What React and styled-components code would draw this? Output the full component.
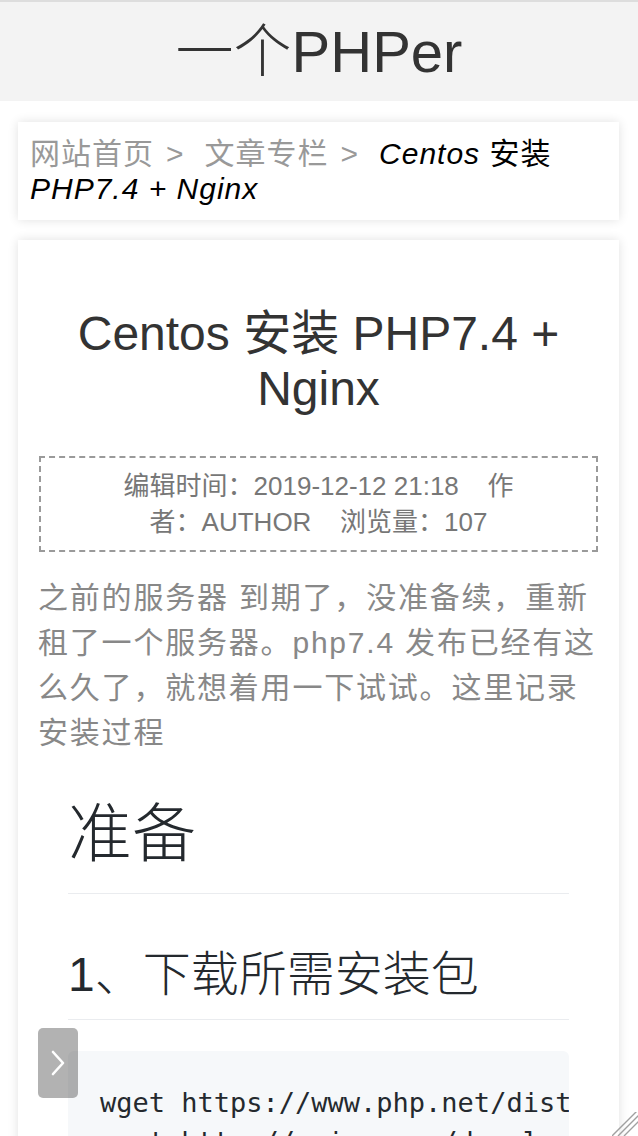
import styled, { createGlobalStyle } from 'styled-components';

const GlobalStyle = createGlobalStyle`
    body {
        margin: 0;
        background: #ffffff;
        font-family: 'Liberation Sans', 'Noto Sans CJK SC', sans-serif;
    }
`;

const meta = [
    { label: '编辑时间：', value: '2019-12-12 21:18' },
    { label: '作者：', value: 'AUTHOR' },
    { label: '浏览量：', value: '107' },
];

const code = [
    'wget https://www.php.net/distributions/php-7.4.0.tar.gz',
    'wget http://nginx.org/download/nginx-1.16.1.tar.gz',
];

export default function App() {
    return (
        <>
            <GlobalStyle />
            <Header>
                <SiteTitle>一个PHPer</SiteTitle>
            </Header>
            <Main>
                <Breadcrumb>
                    <Crumb href='#'>网站首页</Crumb>
                    <Sep>&gt;</Sep>
                    <Crumb href='#'>文章专栏</Crumb>
                    <Sep>&gt;</Sep>
                    <Current>Centos 安装 PHP7.4 + Nginx</Current>
                </Breadcrumb>
                <Article>
                    <ArticleTitle>Centos 安装 PHP7.4 + Nginx</ArticleTitle>
                    <MetaBox>
                        {meta.map((m, i) => (
                            <MetaItem key={m.label} first={i === 0}>
                                {m.label}
                                {m.value}
                            </MetaItem>
                        ))}
                    </MetaBox>
                    <Summary>
                        之前的服务器 到期了，没准备续，重新租了一个服务器。php7.4 发布已经有这么久了，就想着用一下试试。这里记录安装过程
                    </Summary>
                    <Markdown>
                        <H1>准备</H1>
                        <H2>1、下载所需安装包</H2>
                        <Pre>
                            <code>{code.join('\n')}</code>
                        </Pre>
                    </Markdown>
                </Article>
            </Main>
            <SideToggle aria-label='open'>
                <svg width='18' height='28' viewBox='0 0 18 28'>
                    <path d='M4 3 L14 14 L4 25' fill='none' stroke='#fff' strokeWidth='2.6' strokeLinecap='round' strokeLinejoin='round' />
                </svg>
            </SideToggle>
            <Grip width='26' height='24' viewBox='0 0 26 24'>
                <path d='M0 24 L26 -2 M6 24 L30 0 M12 24 L32 4' stroke='#a0a0a0' strokeWidth='1.4' />
            </Grip>
        </>
    );
}

const Header = styled.header`
    height: 99px;
    border-top: 2px solid #dddddd;
    background: #f3f3f3;
    display: flex;
    align-items: center;
    justify-content: center;
`;

const SiteTitle = styled.h1`
    margin: 0;
    font-size: 58px;
    font-weight: 300;
    color: #333333;
    line-height: 1;
`;

const Main = styled.main`
    padding: 21px 19px 0 18px;
    display: flex;
    flex-direction: column;
    gap: 20px;
`;

const Card = styled.section`
    background: #ffffff;
    box-shadow: 0 0 10px rgba(0, 0, 0, 0.12);
`;

const Breadcrumb = styled(Card)`
    padding: 14px 12px;
    font-size: 30px;
    line-height: 35px;
    letter-spacing: 1px;
`;

const Crumb = styled.a`
    color: #999999;
    text-decoration: none;
`;

const Sep = styled.span`
    color: #999999;
    margin: 0 20px 0 12px;
`;

const Current = styled.span`
    color: #000000;
    font-style: italic;
    font-synthesis: none;
`;

const Article = styled(Card)`
    padding: 20px 20px 0 20px;
    min-height: 1000px;
`;

const ArticleTitle = styled.h2`
    margin: 46px 0 0;
    text-align: center;
    font-size: 48px;
    line-height: 55px;
    font-weight: 400;
    color: #333333;
`;

const MetaBox = styled.div`
    margin: 40px 1px 0;
    padding: 10px 64px;
    border: 2px dashed #9a9a9a;
    text-align: center;
    font-size: 26px;
    line-height: 36px;
    color: #777777;
`;

const MetaItem = styled.span`
    margin-left: ${({ first }) => (first ? '0' : '1.1em')};
`;

const Summary = styled.p`
    margin: 23px 0 0;
    font-size: 30px;
    line-height: 45px;
    letter-spacing: 1.8px;
    color: #888888;
`;

const Markdown = styled.div`
    padding: 0 30px;
    color: #24292e;
    font-size: 32px;
`;

const H1 = styled.h1`
    margin: 39px 0 0;
    padding-bottom: 19px;
    border-bottom: 1px solid #eaecef;
    font-size: 64px;
    line-height: 80px;
    font-weight: 300;
`;

const H2 = styled.h2`
    margin: 51px 0 0;
    padding-bottom: 14px;
    border-bottom: 1px solid #eaecef;
    font-size: 48px;
    line-height: 60px;
    font-weight: 300;
`;

const Pre = styled.pre`
    margin: 31px 0 0;
    padding: 32px;
    background: #f6f8fa;
    border-radius: 6px;
    overflow: hidden;
    font-family: 'DejaVu Sans Mono', monospace;
    font-size: 27px;
    line-height: 39px;
    color: #24292e;
`;

const SideToggle = styled.button`
    position: fixed;
    left: 38px;
    bottom: 38px;
    width: 40px;
    height: 70px;
    padding: 0;
    border: none;
    border-radius: 5px;
    background: rgba(0, 0, 0, 0.3);
    display: flex;
    align-items: center;
    justify-content: center;
`;

const Grip = styled.svg`
    position: fixed;
    right: 0;
    bottom: 0;
`;
